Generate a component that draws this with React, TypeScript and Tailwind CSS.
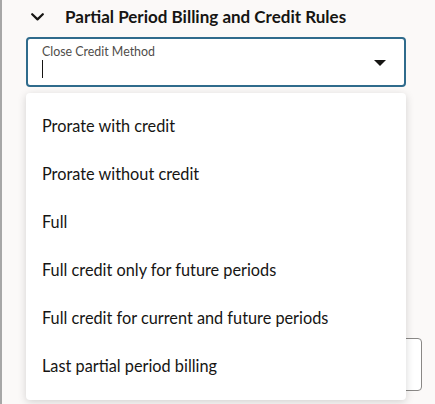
import { useState } from "react";

const options = [
  "Prorate with credit",
  "Prorate without credit",
  "Full",
  "Full credit only for future periods",
  "Full credit for current and future periods",
  "Last partial period billing",
];

const ChevronDown = () => (
  <svg width="13" height="8" viewBox="0 0 13 8" fill="none">
    <path d="M1.2 1.2 L6.5 6.4 L11.8 1.2" stroke="#161513" strokeWidth="2.2" strokeLinecap="round" strokeLinejoin="round" />
  </svg>
);

const Caret = () => (
  <svg width="12" height="6" viewBox="0 0 12 6">
    <path d="M0 0 H12 L6 6 Z" fill="#161513" />
  </svg>
);

export default function App() {
  const [open] = useState(true);

  return (
    <div
      className="relative h-[404px] w-[435px] overflow-hidden border-l-2 border-[#a7a7a7] bg-[#fbf9f8]"
      style={{ fontFamily: "Lato, 'Noto Sans', sans-serif" }}
    >
      {/* section header */}
      <div className="flex h-[33px] items-center pl-[29px]">
        <ChevronDown />
        <h2 className="ml-[21px] text-[17px] font-bold text-[#161513]">
          Partial Period Billing and Credit Rules
        </h2>
      </div>

      {/* select field */}
      <div className="ml-[24px] mt-[4px] flex h-[50px] w-[380px] items-start justify-between rounded-[4px] border-2 border-[#2f6b8c] bg-white px-[14px] pt-[5px]">
        <div className="flex flex-col">
          <span className="text-[12.4px] leading-[15px] text-[#4f4d4a]">Close Credit Method</span>
          <span className="mt-[1px] h-[18px] w-[1px] bg-[#161513]" />
        </div>
        <div className="mr-[4px] mt-[16px]">
          <Caret />
        </div>
      </div>

      {/* next field, covered by the list */}
      <div className="ml-[24px] mt-[251px] h-[53px] w-[396px] rounded-[4px] border border-[#8a8886] bg-white" />

      {open && (
        <ul className="absolute left-[24px] top-[93px] w-[380px] rounded-[4px] bg-white pb-[10px] pt-[9px] shadow-[0_2px_8px_rgba(0,0,0,0.16)]">
          {options.map((o) => (
            <li key={o} className="flex h-[48px] items-center px-[16px] text-[16.3px] text-[#161513]">
              {o}
            </li>
          ))}
        </ul>
      )}
    </div>
  );
}
